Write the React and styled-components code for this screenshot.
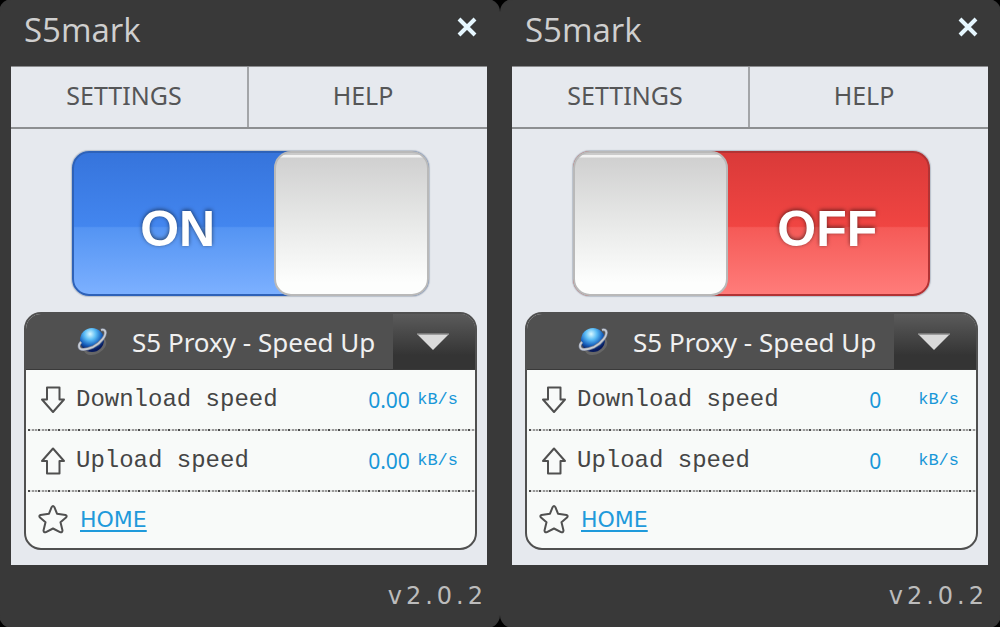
import React, { useId, useState } from "react";
import styled, { createGlobalStyle, css } from "styled-components";

const GlobalStyle = createGlobalStyle`
  * { box-sizing: border-box; }
  body { margin: 0; background: #000; font-family: "Open Sans", "Noto Sans", sans-serif; }
  button, select { border: 0; margin: 0; padding: 0; background: none; color: inherit; font: inherit; cursor: pointer; }
`;

const Page = styled.main`
  display: grid;
  grid-template-columns: 1fr 1fr;
  column-gap: 2px;
`;

const Window = styled.section`
  display: flex;
  flex-direction: column;
  padding: 0 12px 0 11px;
  border-radius: 12px;
  background: #393939;
  box-shadow: 0 0 0 1px #393939;
`;

const TitleBar = styled.header`
  display: flex;
  align-items: flex-start;
  justify-content: space-between;
  height: 66px;
  padding: 6px 9px 0 13px;
`;

const Title = styled.h1`
  margin: 0;
  font-size: 33px;
  line-height: 48px;
  font-weight: 400;
  color: #cfcfcf;
`;

const CloseButton = styled.button`
  display: flex;
  padding: 10px 0;
  svg { display: block; }
`;

const Content = styled.div`
  background: #e6e9ee;
  border-top: 1px solid #8b8c8e;
`;

const Tabs = styled.nav`
  display: grid;
  grid-template-columns: 59fr 60fr;
  border-bottom: 2px solid #8d8f91;
`;

const Tab = styled.button`
  height: 60px;
  padding: 0 10px 4px 0;
  font: 25px/34px "Noto Sans", sans-serif;
  color: #555657;
  & + & { border-left: 2px solid #a3a5a8; }
`;

const Body = styled.div`
  display: flex;
  flex-direction: column;
  gap: 16px;
  padding: 22px 10px 15px 13px;
`;

const face = {
  on: css`
    background: linear-gradient(#3674dc, #4386ef 52%, #5494f3 53%, #7cb0ff);
    border-color: #2e62b8;
  `,
  off: css`
    background: linear-gradient(#da3a39, #f04542 52%, #f55a57 53%, #ff7c7a);
    border-color: #b23334;
  `,
};

const Switch = styled.button`
  display: flex;
  flex-direction: ${(p) => (p.$on ? "row" : "row-reverse")};
  align-self: center;
  width: 79%;
  height: 145px;
  border-radius: 17px;
  box-shadow: 0 0 1px 1px #b9c0ca;
  && { border: 2px solid; ${(p) => (p.$on ? face.on : face.off)} }
`;

const SwitchText = styled.span`
  flex: 1;
  align-self: center;
  padding-top: 11px;
  padding-left: ${(p) => (p.$on ? "6px" : "0")};
  font: bold 50px/56px "Liberation Sans", Arial, sans-serif;
  color: #fff;
  text-shadow: 0 -1px 4px rgba(0, 0, 0, 0.6);
`;

const Knob = styled.span`
  width: 44%;
  margin: -2px;
  border: 2px solid #b9b9b9;
  border-radius: 17px;
  background: linear-gradient(#cbcbcb 0 2px, #f3f3f3 2px 4px, #d0d0d0 5px, #e8e9e8 50%, #fdfefd 92%);
`;

const Panel = styled.div`
  overflow: hidden;
  border: 2px solid #505050;
  border-radius: 17px;
  background: #f8faf9;
`;

const ServerBar = styled.div`
  display: flex;
  align-items: center;
  height: 56px;
  padding-left: 50px;
  background: #505050;
  border-bottom: 1px solid #3a3a3a;
`;

const ServerSelect = styled.select`
  flex: 1;
  min-width: 0;
  height: 54px;
  padding-left: 24px;
  appearance: none;
  outline: none;
  font: 26px/34px "Noto Sans", sans-serif;
  color: #f0f0f0;
  text-overflow: clip;
`;

const DropButton = styled.button`
  display: flex;
  align-items: center;
  width: 82px;
  height: 55px;
  && { padding-left: 24px; background: linear-gradient(#5b5b5b, #343434 75%); }
`;

const Row = styled.div`
  display: flex;
  align-items: center;
  height: 61px;
  padding: 0 17px 0 12px;
  border-bottom: 2px solid transparent;
  &:not(:last-child) {
    background: repeating-linear-gradient(90deg, #4c4c4c 0 2px, #dcdddd 2px 4px, #999 4px 6px, #dcdddd 6px 7px, #999 7px 9px, #dcdddd 9px 10px)
      2px 100% / 100% 2px no-repeat border-box;
  }
  &:last-child { height: 56px; border: 0; }
`;

const RowLabel = styled.span`
  flex: 1;
  margin-left: 8px;
  font: 24px/32px "Liberation Mono", monospace;
  color: #454545;
`;

const Amount = styled.output`
  width: 49px;
  font: 21px/32px "Noto Sans", sans-serif;
  color: #1997d8;
`;

const Unit = styled.span`
  font: 17px/32px "Liberation Mono", monospace;
  color: #1997d8;
`;

const HomeLink = styled.a`
  margin-left: 12px;
  font: 22px/32px "DejaVu Sans", sans-serif;
  color: #1f9adb;
  text-decoration-thickness: 2px;
  text-underline-offset: 3px;
`;

const Footer = styled.footer`
  padding: 15px 0;
  text-align: right;
  font: 24px/32px "DejaVu Sans", sans-serif;
  letter-spacing: 4px;
  color: #bcbcbc;
`;

const CloseIcon = () => (
  <svg width="22" height="22" viewBox="0 0 22 22" aria-hidden="true">
    <path d="M3 3 19 19M19 3 3 19" stroke="#e6f7ff" strokeWidth="4" />
  </svg>
);

const PlanetIcon = () => {
  const id = useId();
  return (
    <svg width="32" height="32" viewBox="0 0 32 32" aria-hidden="true">
      <defs>
        <radialGradient id={id} cx=".42" cy=".25" r=".8">
          <stop offset="0" stopColor="#d9f8ff" />
          <stop offset=".3" stopColor="#5bbcf5" />
          <stop offset=".6" stopColor="#1761bd" />
          <stop offset=".85" stopColor="#081a5c" />
        </radialGradient>
      </defs>
      <ellipse cx="19" cy="20" rx="12" ry="8" fill="#666" transform="rotate(-28 19 20)" />
      <circle cx="16" cy="14" r="12" fill={`url(#${id})`} />
      <path d="M25 4Q28 3 29 5C31 9 25 17 17 21C10 24 3 25 3 20C3 18 4 17 5 16" fill="none" stroke="#777f91" strokeWidth="3" />
      <path d="M25 4Q28 3 29 5C31 9 25 17 17 21C10 24 3 25 3 20C3 18 4 17 5 16" fill="none" stroke="#c6cbd3" strokeWidth="1.8" />
    </svg>
  );
};

const TriangleIcon = () => (
  <svg width="32" height="18" viewBox="0 0 32 18" aria-hidden="true">
    <path d="M0 1H32L16 17Z" fill="#dadada" />
    <path d="M0 1H32" stroke="#888" strokeWidth="1.5" />
  </svg>
);

const shapes = {
  down: "M9 3.5H21.5V15.5H26L15 28L4 15.5H9Z",
  up: "M9 28.5H21.5V16H26L15 3.5L4 16H9Z",
  star: "M13.6 3.2Q15 1 16.4 3.2L19 9.7L27.5 11Q29.5 11.8 28 13.5L22.5 18.2L24.5 26.4Q24.3 29 22 28.1L15 24.5L8 28.1Q5.7 29 5.5 26.4L7.5 18.2L2 13.5Q.5 11.8 2.5 11L11 9.7Z",
};

const RowIcon = ({ shape }) => (
  <svg width="30" height="32" viewBox="0 0 30 32" aria-hidden="true">
    <path d={shapes[shape]} fill="none" stroke="#505050" strokeWidth="2" strokeLinejoin="round" />
  </svg>
);

function SpeedRow({ shape, label, value }) {
  return (
    <Row>
      <RowIcon shape={shape} />
      <RowLabel>{label}</RowLabel>
      <Amount aria-label={label}>{value}</Amount>
      <Unit>kB/s</Unit>
    </Row>
  );
}

function ProxyWindow({ initiallyOn }) {
  const [on, setOn] = useState(initiallyOn);
  const speed = on ? "0.00" : "0";
  return (
    <Window>
      <TitleBar>
        <Title>S5mark</Title>
        <CloseButton aria-label="Close"><CloseIcon /></CloseButton>
      </TitleBar>
      <Content>
        <Tabs>
          <Tab>SETTINGS</Tab>
          <Tab>HELP</Tab>
        </Tabs>
        <Body>
          <Switch role="switch" aria-checked={on} $on={on} onClick={() => setOn(!on)}>
            <SwitchText $on={on}>{on ? "ON" : "OFF"}</SwitchText>
            <Knob />
          </Switch>
          <Panel>
            <ServerBar>
              <PlanetIcon />
              <ServerSelect aria-label="Server">
                <option>S5 Proxy - Speed Up</option>
              </ServerSelect>
              <DropButton aria-label="Show servers"><TriangleIcon /></DropButton>
            </ServerBar>
            <SpeedRow shape="down" label="Download speed" value={speed} />
            <SpeedRow shape="up" label="Upload speed" value={speed} />
            <Row>
              <RowIcon shape="star" />
              <HomeLink href="#home">HOME</HomeLink>
            </Row>
          </Panel>
        </Body>
      </Content>
      <Footer>v2.0.2</Footer>
    </Window>
  );
}

export default function App() {
  return (
    <>
      <GlobalStyle />
      <Page>
        <ProxyWindow initiallyOn />
        <ProxyWindow initiallyOn={false} />
      </Page>
    </>
  );
}
